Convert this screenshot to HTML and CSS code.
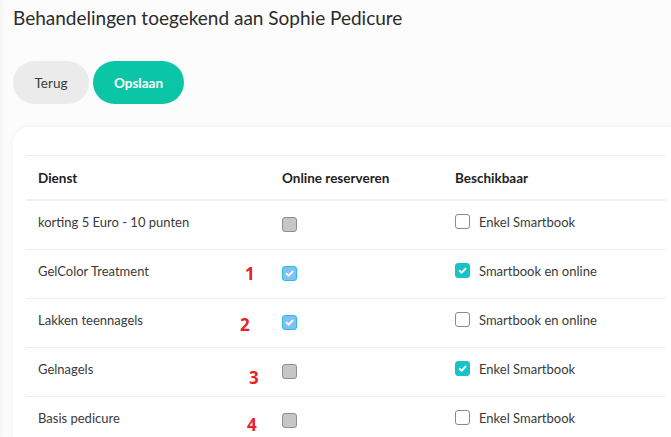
FILE: index.html
```html
<!DOCTYPE html>
<html>
<head>
<meta charset="utf-8">
<link rel="stylesheet" href="styles.css">
</head>
<body>
<div class="page">
  <h1 class="title">Behandelingen toegekend aan Sophie Pedicure</h1>
  <div class="actions">
    <button class="btn btn-back">Terug</button>
    <button class="btn btn-save">Opslaan</button>
  </div>
  <div class="card">
    <table class="grid">
      <thead>
        <tr>
          <th class="c1">Dienst</th>
          <th class="c2">Online reserveren</th>
          <th class="c3">Beschikbaar</th>
        </tr>
      </thead>
      <tbody>
        <tr>
          <td class="c1">korting 5 Euro - 10 punten</td>
          <td class="c2"><span class="box box-gray"></span></td>
          <td class="c3"><label class="opt"><span class="box box-empty"></span>Enkel Smartbook</label></td>
        </tr>
        <tr>
          <td class="c1">GelColor Treatment<span class="mark m1">1</span></td>
          <td class="c2"><span class="box box-blue"><svg viewBox="0 0 10 10"><path d="M2.4 5.2 L4.3 7 L7.8 3.2" /></svg></span></td>
          <td class="c3"><label class="opt"><span class="box box-teal"><svg viewBox="0 0 10 10"><path d="M2.4 5.2 L4.3 7 L7.8 3.2" /></svg></span>Smartbook en online</label></td>
        </tr>
        <tr>
          <td class="c1">Lakken teennagels<span class="mark m2">2</span></td>
          <td class="c2"><span class="box box-blue"><svg viewBox="0 0 10 10"><path d="M2.4 5.2 L4.3 7 L7.8 3.2" /></svg></span></td>
          <td class="c3"><label class="opt"><span class="box box-empty"></span>Smartbook en online</label></td>
        </tr>
        <tr>
          <td class="c1">Gelnagels<span class="mark m3">3</span></td>
          <td class="c2"><span class="box box-gray"></span></td>
          <td class="c3"><label class="opt"><span class="box box-teal"><svg viewBox="0 0 10 10"><path d="M2.4 5.2 L4.3 7 L7.8 3.2" /></svg></span>Enkel Smartbook</label></td>
        </tr>
        <tr>
          <td class="c1">Basis pedicure<span class="mark m4">4</span></td>
          <td class="c2"><span class="box box-gray"></span></td>
          <td class="c3"><label class="opt"><span class="box box-empty"></span>Enkel Smartbook</label></td>
        </tr>
      </tbody>
    </table>
  </div>
</div>
</body>
</html>
```

FILE: styles.css
```css
html, body {
  margin: 0;
  padding: 0;
  background: #fcfcfc;
  font-family: "Lato", "Open Sans", sans-serif;
  color: #333;
  overflow: hidden;
}

.page {
  padding: 0 0 0 13px;
  box-shadow: inset 4px 0 6px -4px rgba(0,0,0,0.06);
  height: 437px;
  overflow: hidden;
}

.title {
  margin: 0;
  font-size: 19px;
  font-weight: 400;
  line-height: 36px;
  color: #2b2b2b;
}

.actions {
  display: flex;
  gap: 4px;
  margin-top: 25px;
}

.btn {
  height: 43px;
  border: none;
  border-radius: 22px;
  font-family: inherit;
  font-size: 13.5px;
  padding: 0;
  cursor: pointer;
}

.btn-back {
  width: 76px;
  background: #ebebeb;
  color: #3a3a3a;
}

.btn-save {
  width: 91px;
  background: #0bc5a7;
  color: #fff;
  font-weight: 700;
}

.card {
  margin-top: 23px;
  margin-right: -20px;
  background: #fff;
  border-radius: 16px 0 0 0;
  box-shadow: 0 0 6px rgba(0,0,0,0.05);
  padding: 28px 25px 0 13px;
  height: 300px;
}

.grid {
  width: 640px;
  border-collapse: collapse;
  font-size: 13px;
}

.grid th {
  text-align: left;
  font-weight: 700;
  font-size: 13.5px;
  color: #222;
  height: 43px;
  padding: 0 12px;
  border-top: 1px solid #efefef;
  border-bottom: 2px solid #efefef;
  vertical-align: middle;
}

.grid td {
  height: 49px;
  box-sizing: border-box;
  padding: 12px 12px 0;
  vertical-align: top;
  line-height: 18px;
  border-bottom: 1px solid #efefef;
  color: #3a3a3a;
}

.c1 { width: 220px; position: relative; }
.c2 { width: 149px; }

.box {
  display: inline-flex;
  align-items: center;
  justify-content: center;
  width: 15px;
  height: 15px;
  box-sizing: border-box;
  border-radius: 3px;
  margin-top: 4px;
  vertical-align: top;
}

.box svg {
  width: 11px;
  height: 11px;
  fill: none;
  stroke: #fff;
  stroke-width: 1.7;
  stroke-linecap: round;
  stroke-linejoin: round;
}

.box-gray {
  background: #c6c6c6;
  border: 1px solid #8e8e8e;
}

.box-empty {
  background: #fff;
  border: 1px solid #8a8a8a;
}

.box-blue {
  background: #84bdfc;
  border: 1px solid #20c4cc;
}

.box-teal {
  background: #16c3c6;
  border: 1px solid #16c3c6;
}

.opt {
  display: flex;
  align-items: flex-start;
  gap: 9px;
}

.opt .box { margin-top: 1px; }

.mark {
  position: absolute;
  color: #e8202a;
  font-family: "Open Sans", sans-serif;
  font-weight: 700;
  font-size: 17px;
  line-height: 18px;
}

.m1 { left: 219px; top: 15px; }
.m2 { left: 214px; top: 17px; }
.m3 { left: 223px; top: 21px; }
.m4 { left: 221px; top: 19px; }
```
